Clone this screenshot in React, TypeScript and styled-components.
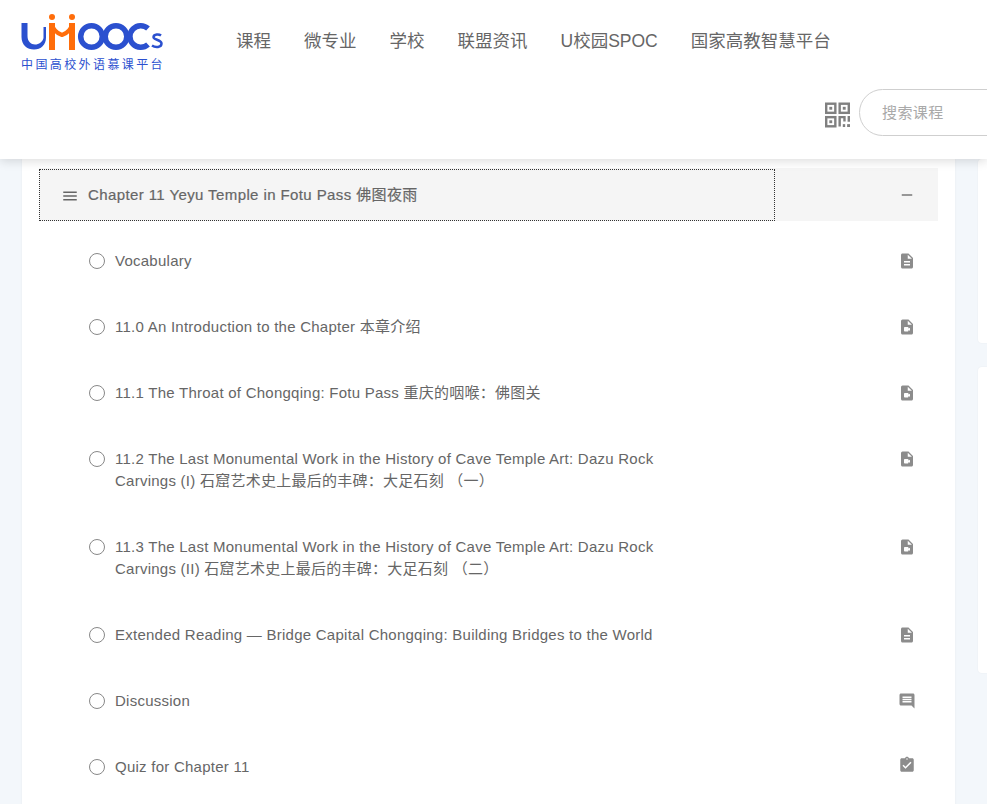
import { createGlobalStyle } from 'styled-components';
import styled from 'styled-components';
import {
  MdAssignmentTurnedIn,
  MdComment,
  MdDescription,
  MdMenu,
  MdRemove,
  MdVideoFile,
} from 'react-icons/md';

const GlobalStyle = createGlobalStyle`
  html, body {
    margin: 0;
    height: 100%;
    overflow: hidden;
    background-color: #f3f7fb;
    font-family: "Liberation Sans", "Noto Sans CJK SC", sans-serif;
  }
`;

const Page = styled.div`
  height: 804px;
  overflow: hidden;
`;

const Header = styled.header`
  position: relative;
  z-index: 2;
  height: 159px;
  background-color: #ffffff;
  box-shadow: 0 2px 10px rgba(0, 0, 0, 0.14);
`;

const TopRow = styled.div`
  display: flex;
  align-items: flex-start;
  height: 89px;
  padding-left: 20px;
`;

const Logo = styled.a`
  display: flex;
  flex-direction: column;
  width: 144px;
  padding-top: 10px;
`;

const LogoMark = styled.svg`
  display: block;
  width: 144px;
  height: 42px;
`;

const Tagline = styled.span`
  margin-top: 6px;
  padding-left: 1px;
  color: #2b50cf;
  font-size: 12px;
  line-height: 14px;
  letter-spacing: 2.4px;
  white-space: nowrap;
`;

const Nav = styled.nav`
  display: flex;
  gap: 33px;
  margin-left: 72px;
  padding-top: 30px;
`;

const NavItem = styled.a`
  color: #666666;
  font-size: 17.5px;
  line-height: 22px;
  white-space: nowrap;
`;

const ToolRow = styled.div`
  display: flex;
  align-items: center;
  gap: 9px;
  padding-left: 825px;
  width: 300px;
`;

const QrIcon = styled.svg`
  flex: none;
  width: 25px;
  height: 26px;
  margin-top: 5px;
  color: #808080;
`;

const SearchBox = styled.div`
  flex: none;
  box-sizing: border-box;
  width: 200px;
  height: 47px;
  padding-left: 22px;
  border: 1px solid #cfcfcf;
  border-radius: 24px;
  color: #a9a9a9;
  font-size: 15px;
  line-height: 45px;
  letter-spacing: 0.4px;
`;

const Content = styled.div`
  display: grid;
  grid-template-columns: 933px 200px;
  gap: 23px;
  padding-left: 22px;
`;

const MainCard = styled.main`
  box-sizing: border-box;
  height: 700px;
  padding: 9px 17px 0;
  background-color: #ffffff;
  box-shadow: 0 0 2px rgba(0, 0, 0, 0.06);
`;

const ChapterHeader = styled.div`
  display: flex;
  align-items: center;
  justify-content: space-between;
  height: 53px;
  background-color: #f5f5f5;
`;

const ChapterLink = styled.a`
  display: flex;
  align-items: center;
  box-sizing: border-box;
  width: 736px;
  height: 52px;
  margin-top: 1px;
  padding-left: 21px;
  border: 1px dotted #333333;
  color: #666666;
  font-size: 15px;
  letter-spacing: 0.4px;
  -webkit-text-stroke: 0.2px #666666;

  svg {
    margin-top: 2px;
  }
`;

const ChapterTitle = styled.span`
  margin-left: 9px;
  margin-bottom: 3px;
  white-space: nowrap;
`;

const Toggle = styled.span`
  display: flex;
  margin-right: 22px;
  color: #777777;
  font-size: 18px;
`;

const LessonList = styled.ul`
  margin: 7px 0 0;
  padding: 0;
  list-style: none;
`;

const LessonRow = styled.li`
  display: flex;
  align-items: flex-start;
  padding: 22px 22px 22px 50px;
`;

const Radio = styled.span`
  flex: none;
  box-sizing: border-box;
  width: 16px;
  height: 16px;
  margin-top: 3px;
  border: 1px solid #888888;
  border-radius: 50%;
`;

const LessonTitle = styled.span`
  flex: none;
  width: 550px;
  margin-left: 10px;
  color: #666666;
  font-size: 15px;
  line-height: 22px;
  letter-spacing: 0.25px;
`;

const LessonIcon = styled.span<{ $top: number }>`
  display: flex;
  margin-left: auto;
  margin-top: ${(p) => p.$top}px;
  color: #8c8c8c;
  font-size: 18px;
  line-height: 0;
`;

const Sidebar = styled.aside`
  display: flex;
  flex-direction: column;
  gap: 24px;
`;

const SideCard = styled.div<{ $height: number }>`
  height: ${(p) => p.$height}px;
  background-color: #ffffff;
  border-radius: 4px;
  box-shadow: 0 0 2px rgba(0, 0, 0, 0.06);
`;

const navItems = ['课程', '微专业', '学校', '联盟资讯', 'U校园SPOC', '国家高教智慧平台'];

const lessons = [
  { title: 'Vocabulary', icon: MdDescription, top: 2 },
  { title: '11.0 An Introduction to the Chapter 本章介绍', icon: MdVideoFile, top: 2 },
  { title: '11.1 The Throat of Chongqing: Fotu Pass 重庆的咽喉：佛图关', icon: MdVideoFile, top: 2 },
  {
    title: '11.2 The Last Monumental Work in the History of Cave Temple Art: Dazu Rock Carvings (I) 石窟艺术史上最后的丰碑：大足石刻 （一）',
    icon: MdVideoFile,
    top: 2,
  },
  {
    title: '11.3 The Last Monumental Work in the History of Cave Temple Art: Dazu Rock Carvings (II) 石窟艺术史上最后的丰碑：大足石刻 （二）',
    icon: MdVideoFile,
    top: 2,
  },
  { title: 'Extended Reading — Bridge Capital Chongqing: Building Bridges to the World', icon: MdDescription, top: 2 },
  { title: 'Discussion', icon: MdComment, top: 2 },
  { title: 'Quiz for Chapter 11', icon: MdAssignmentTurnedIn, top: 0 },
];

// logo is drawn in page coordinates, so it lines up with the crops of the reference
const UMoocsMark = () => (
  <LogoMark viewBox="20 10 144 42" fill="none">
    <path
      d="M21.5 23H27.500V36C27.500 41.500 31 44.500 35 44.500C39 44.500 42.500 42 43.500 38V27H46V37.500C46 45 41 49.500 34 49.500C27 49.500 21.500 45 21.500 37Z"
      fill="#2b50cf"
    />
    <g stroke="#2b50cf" strokeWidth="5.5">
      <circle cx="91.5" cy="36.5" r="10.8" />
      <circle cx="116" cy="36.500" r="10.8" />
      <path d="M148 28.500a10.800 10.800 0 1 0 0 16" />
    </g>
    <path d="M161 35.500c-2-1.500-7-1.500-7.500 1.500s8 2.500 8 6.500-6 4.500-9.500 2" stroke="#2b50cf" strokeWidth="2.5" />
    <g stroke="#ff6d0a">
      <path d="M52 23V50M72 23V50" strokeWidth="6" />
      <path d="M52 24c1 5 4 9 10 11 6-2 9-6 10-11" strokeWidth="4" />
    </g>
    <circle cx="52" cy="17" r="3" fill="#ff6d0a" />
    <circle cx="72" cy="17" r="3" fill="#ff6d0a" />
  </LogoMark>
);

const QrCode = () => (
  <QrIcon viewBox="0 0 26 26" fill="none" stroke="currentColor" strokeWidth="2.5">
    <rect x="1.250" y="1.250" width="9.500" height="9.500" />
    <rect x="15.250" y="1.250" width="9.500" height="9.500" />
    <rect x="1.250" y="15.250" width="9.500" height="9.500" />
    <path d="M15.250 25v-9.750h5v4.500M24.750 14v6" />
    <g fill="currentColor" stroke="none">
      <rect x="4.500" y="4.500" width="3" height="3" />
      <rect x="18.500" y="4.500" width="3" height="3" />
      <rect x="4.500" y="18.500" width="3" height="3" />
      <rect x="18.500" y="22.500" width="2.500" height="3" />
      <rect x="23" y="22.500" width="3" height="3" />
    </g>
  </QrIcon>
);

export default function App() {
  return (
    <Page>
      <GlobalStyle />
      <Header>
        <TopRow>
          <Logo>
            <UMoocsMark />
            <Tagline>中国高校外语慕课平台</Tagline>
          </Logo>
          <Nav>
            {navItems.map((item) => (
              <NavItem key={item}>{item}</NavItem>
            ))}
          </Nav>
        </TopRow>
        <ToolRow>
          <QrCode />
          <SearchBox>搜索课程</SearchBox>
        </ToolRow>
      </Header>
      <Content>
        <MainCard>
          <ChapterHeader>
            <ChapterLink>
              <MdMenu size={18} />
              <ChapterTitle>Chapter 11 Yeyu Temple in Fotu Pass 佛图夜雨</ChapterTitle>
            </ChapterLink>
            <Toggle>
              <MdRemove />
            </Toggle>
          </ChapterHeader>
          <LessonList>
            {lessons.map((lesson) => (
              <LessonRow key={lesson.title}>
                <Radio />
                <LessonTitle>{lesson.title}</LessonTitle>
                <LessonIcon $top={lesson.top}>
                  <lesson.icon />
                </LessonIcon>
              </LessonRow>
            ))}
          </LessonList>
        </MainCard>
        <Sidebar>
          <SideCard $height={184} />
          <SideCard $height={306} />
        </Sidebar>
      </Content>
    </Page>
  );
}
